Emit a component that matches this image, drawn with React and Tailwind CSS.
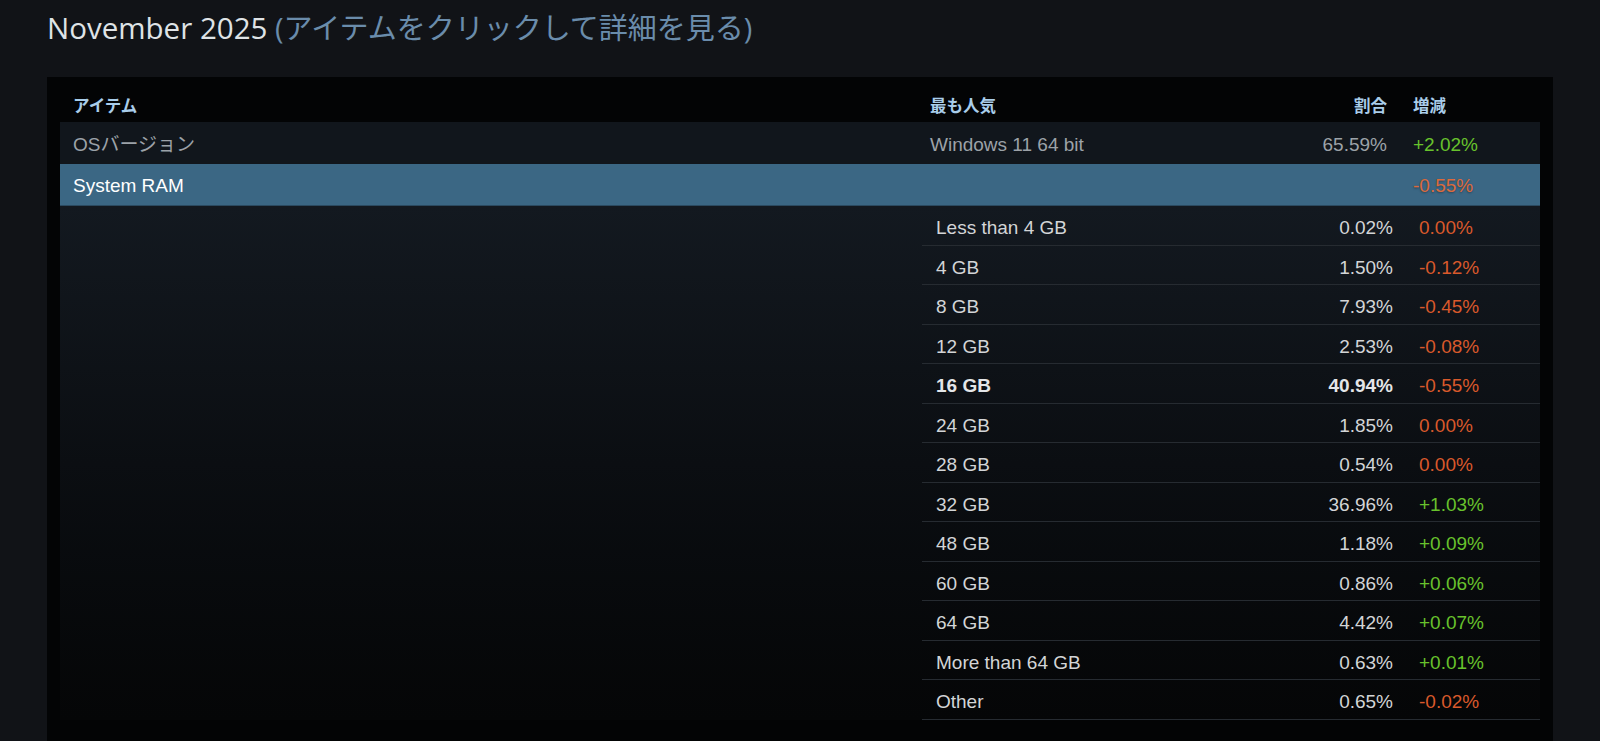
const ROWS = [
  { label: 'Less than 4 GB', pct: '0.02%', change: '0.00%', up: false },
  { label: '4 GB', pct: '1.50%', change: '-0.12%', up: false },
  { label: '8 GB', pct: '7.93%', change: '-0.45%', up: false },
  { label: '12 GB', pct: '2.53%', change: '-0.08%', up: false },
  { label: '16 GB', pct: '40.94%', change: '-0.55%', up: false, top: true },
  { label: '24 GB', pct: '1.85%', change: '0.00%', up: false },
  { label: '28 GB', pct: '0.54%', change: '0.00%', up: false },
  { label: '32 GB', pct: '36.96%', change: '+1.03%', up: true },
  { label: '48 GB', pct: '1.18%', change: '+0.09%', up: true },
  { label: '60 GB', pct: '0.86%', change: '+0.06%', up: true },
  { label: '64 GB', pct: '4.42%', change: '+0.07%', up: true },
  { label: 'More than 64 GB', pct: '0.63%', change: '+0.01%', up: true },
  { label: 'Other', pct: '0.65%', change: '-0.02%', up: false },
];

function SubRow({ row }) {
  return (
    <div className="flex items-center h-[39.5px] pt-[6px] border-b border-[#262b31]">
      <div className={`flex-1 pl-[14px] ${row.top ? 'font-bold text-[#e4e6e8]' : 'text-[#d3d5d7]'}`}>{row.label}</div>
      <div className={`w-[80px] text-right ${row.top ? 'font-bold text-[#e4e6e8]' : 'text-[#d3d5d7]'}`}>{row.pct}</div>
      <div className={`w-[147px] pl-[26px] ${row.up ? 'text-[#68c22c]' : 'text-[#d9592b]'}`}>{row.change}</div>
    </div>
  );
}

export default function App() {
  return (
    <div className="min-h-screen bg-[#111317] pl-[47px] pt-[8px] font-['Liberation_Sans','Noto_Sans_CJK_JP',sans-serif]">
      <h2 className="text-[29.5px] leading-[40px] font-['Open_Sans','Noto_Sans_CJK_JP',sans-serif] text-[#dfe3e6]">
        November 2025 <span className="text-[29px] text-[#6a8cab]">(アイテムをクリックして詳細を見る)</span>
      </h2>

      <div className="mt-[29px] w-[1506px] bg-[#030405] px-[13px] pb-[40px]">
        {/* header */}
        <div className="flex items-end h-[45px] pb-[5px] text-[16.5px] leading-[24px] font-bold text-[#a9cdea] font-['Noto_Sans_CJK_JP',sans-serif]">
          <div className="w-[870px] pl-[13px]">アイテム</div>
          <div className="flex-1">最も人気</div>
          <div className="w-[80px] text-right">割合</div>
          <div className="w-[153px] pl-[26px]">増減</div>
        </div>

        {/* OS version row */}
        <div className="flex items-center h-[42px] pt-[4px] bg-[#11161c] text-[19px] text-[#9ca2a8]">
          <div className="w-[870px] pl-[13px]">OSバージョン</div>
          <div className="flex-1">Windows 11 64 bit</div>
          <div className="w-[80px] text-right">65.59%</div>
          <div className="w-[153px] pl-[26px] text-[#68c22c]">+2.02%</div>
        </div>

        {/* selected row */}
        <div className="flex items-center h-[42px] pt-[4px] bg-[#3b6784] text-[19px] text-white border-b border-[#2b4a60]">
          <div className="flex-1 pl-[13px]">System RAM</div>
          <div className="w-[153px] pl-[26px] text-[#dc6a3c] [text-shadow:0_1px_2px_rgba(0,0,0,0.35)]">-0.55%</div>
        </div>

        {/* breakdown */}
        <div className="flex bg-gradient-to-b from-[#131920] via-[#0b0e12] to-[#050607] text-[19px]">
          <div className="w-[862px]" />
          <div className="w-[618px]">
            {ROWS.map((row) => (
              <SubRow key={row.label} row={row} />
            ))}
          </div>
        </div>
      </div>
    </div>
  );
}
